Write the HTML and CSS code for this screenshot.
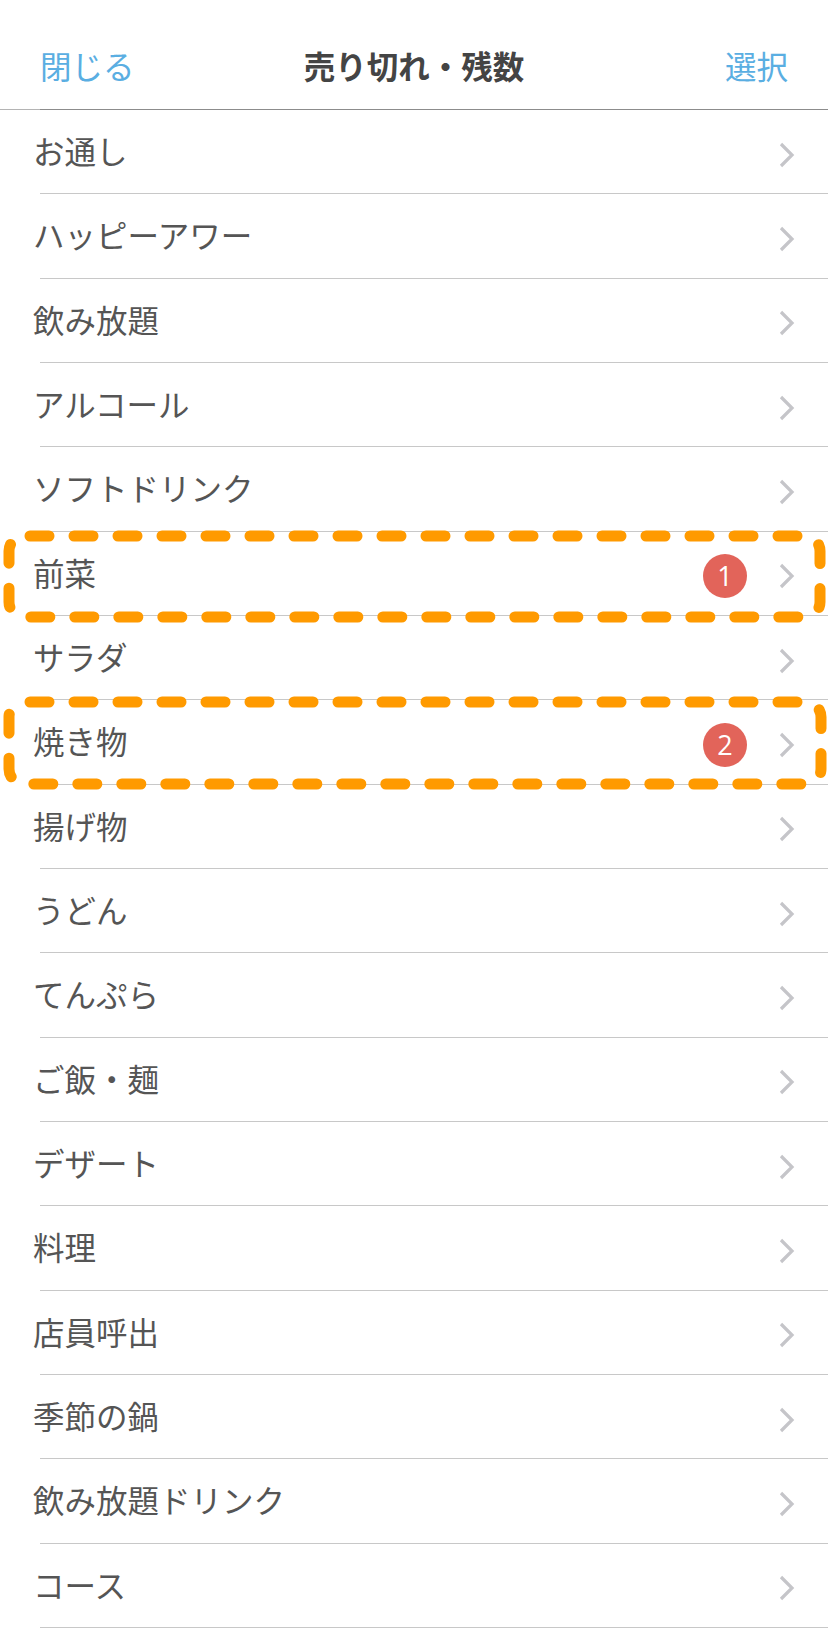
FILE: index.html
```html
<!DOCTYPE html>
<html lang="ja">
<head>
<meta charset="utf-8">
<title>売り切れ・残数</title>
<link rel="stylesheet" href="styles.css">
</head>
<body>
<div class="screen">
  <header class="nav">
    <span class="nav-btn nav-left">閉じる</span>
    <span class="nav-title">売り切れ・残数</span>
    <span class="nav-btn nav-right">選択</span>
  </header>
  <ul class="list">
    <li class="row"><span class="label">お通し</span><span class="acc"><svg class="chev" viewBox="0 0 16 26"><polyline points="2,2 13,13 2,24"/></svg></span></li>
    <li class="row"><span class="label">ハッピーアワー</span><span class="acc"><svg class="chev" viewBox="0 0 16 26"><polyline points="2,2 13,13 2,24"/></svg></span></li>
    <li class="row"><span class="label">飲み放題</span><span class="acc"><svg class="chev" viewBox="0 0 16 26"><polyline points="2,2 13,13 2,24"/></svg></span></li>
    <li class="row"><span class="label">アルコール</span><span class="acc"><svg class="chev" viewBox="0 0 16 26"><polyline points="2,2 13,13 2,24"/></svg></span></li>
    <li class="row"><span class="label">ソフトドリンク</span><span class="acc"><svg class="chev" viewBox="0 0 16 26"><polyline points="2,2 13,13 2,24"/></svg></span></li>
    <li class="row"><span class="label">前菜</span><span class="acc"><span class="badge">1</span><svg class="chev" viewBox="0 0 16 26"><polyline points="2,2 13,13 2,24"/></svg></span></li>
    <li class="row"><span class="label">サラダ</span><span class="acc"><svg class="chev" viewBox="0 0 16 26"><polyline points="2,2 13,13 2,24"/></svg></span></li>
    <li class="row"><span class="label">焼き物</span><span class="acc"><span class="badge">2</span><svg class="chev" viewBox="0 0 16 26"><polyline points="2,2 13,13 2,24"/></svg></span></li>
    <li class="row"><span class="label">揚げ物</span><span class="acc"><svg class="chev" viewBox="0 0 16 26"><polyline points="2,2 13,13 2,24"/></svg></span></li>
    <li class="row"><span class="label">うどん</span><span class="acc"><svg class="chev" viewBox="0 0 16 26"><polyline points="2,2 13,13 2,24"/></svg></span></li>
    <li class="row"><span class="label">てんぷら</span><span class="acc"><svg class="chev" viewBox="0 0 16 26"><polyline points="2,2 13,13 2,24"/></svg></span></li>
    <li class="row"><span class="label">ご飯・麺</span><span class="acc"><svg class="chev" viewBox="0 0 16 26"><polyline points="2,2 13,13 2,24"/></svg></span></li>
    <li class="row"><span class="label">デザート</span><span class="acc"><svg class="chev" viewBox="0 0 16 26"><polyline points="2,2 13,13 2,24"/></svg></span></li>
    <li class="row"><span class="label">料理</span><span class="acc"><svg class="chev" viewBox="0 0 16 26"><polyline points="2,2 13,13 2,24"/></svg></span></li>
    <li class="row"><span class="label">店員呼出</span><span class="acc"><svg class="chev" viewBox="0 0 16 26"><polyline points="2,2 13,13 2,24"/></svg></span></li>
    <li class="row"><span class="label">季節の鍋</span><span class="acc"><svg class="chev" viewBox="0 0 16 26"><polyline points="2,2 13,13 2,24"/></svg></span></li>
    <li class="row"><span class="label">飲み放題ドリンク</span><span class="acc"><svg class="chev" viewBox="0 0 16 26"><polyline points="2,2 13,13 2,24"/></svg></span></li>
    <li class="row"><span class="label">コース</span><span class="acc"><svg class="chev" viewBox="0 0 16 26"><polyline points="2,2 13,13 2,24"/></svg></span></li>
  </ul>
  <svg class="highlights" viewBox="0 0 828 1628" aria-hidden="true">
    <rect x="9" y="536" width="811" height="81" rx="15" ry="15"/>
    <rect x="9" y="702" width="812" height="82" rx="15" ry="15"/>
  </svg>
</div>
</body>
</html>
```
FILE: styles.css
```css
html, body {
  margin: 0;
  padding: 0;
  background: #ffffff;
  overflow: hidden;
}

.screen {
  position: relative;
  width: 828px;
  height: 1628px;
  font-family: "Noto Sans CJK JP", "Noto Sans", sans-serif;
  color: #555555;
}

.nav {
  box-sizing: border-box;
  height: 110px;
  padding: 39px 40px 0 40px;
  display: grid;
  grid-template-columns: 1fr auto 1fr;
  align-items: start;
  background:
    linear-gradient(#8c8c8c, #8c8c8c) no-repeat 40px 100% / calc(100% - 40px) 1px,
    linear-gradient(#b4b4b4, #b4b4b4) no-repeat 0 100% / 40px 1px;
}

.nav-btn {
  font-size: 31.5px;
  line-height: 52px;
  color: #5aaee2;
}

.nav-left {
  justify-self: start;
}

.nav-right {
  justify-self: end;
}

.nav-title {
  font-size: 31.5px;
  line-height: 52px;
  font-weight: 700;
  color: #444444;
}

.list {
  list-style: none;
  margin: 0;
  padding: 0;
}

.row {
  box-sizing: border-box;
  height: 84.33px;
  display: flex;
  align-items: center;
  justify-content: space-between;
  padding: 0 33px 0 33px;
  background: linear-gradient(#c8c8c8, #c8c8c8) no-repeat 40px 100% / calc(100% - 40px) 1px;
}

.label {
  font-size: 31.5px;
  line-height: 40px;
  padding-bottom: 4px;
  color: #555555;
}

.acc {
  display: flex;
  align-items: center;
  gap: 32px;
  padding-top: 5px;
}

.badge {
  width: 44px;
  height: 44px;
  border-radius: 50%;
  background: #e2645a;
  color: #ffffff;
  font-family: "Open Sans", "Liberation Sans", sans-serif;
  font-weight: 400;
  font-size: 27px;
  line-height: 44px;
  text-align: center;
}

.chev {
  display: block;
  width: 16px;
  height: 26px;
}

.chev polyline {
  fill: none;
  stroke: #c5c5c9;
  stroke-width: 3.2;
  stroke-linecap: butt;
  stroke-linejoin: miter;
}

.highlights {
  position: absolute;
  left: 0;
  top: 0;
  width: 828px;
  height: 1628px;
  pointer-events: none;
}

.highlights rect {
  fill: none;
  stroke: #ff9a00;
  stroke-width: 11;
  stroke-linecap: round;
  stroke-dasharray: 19 25;
  stroke-dashoffset: -6;
}
```
